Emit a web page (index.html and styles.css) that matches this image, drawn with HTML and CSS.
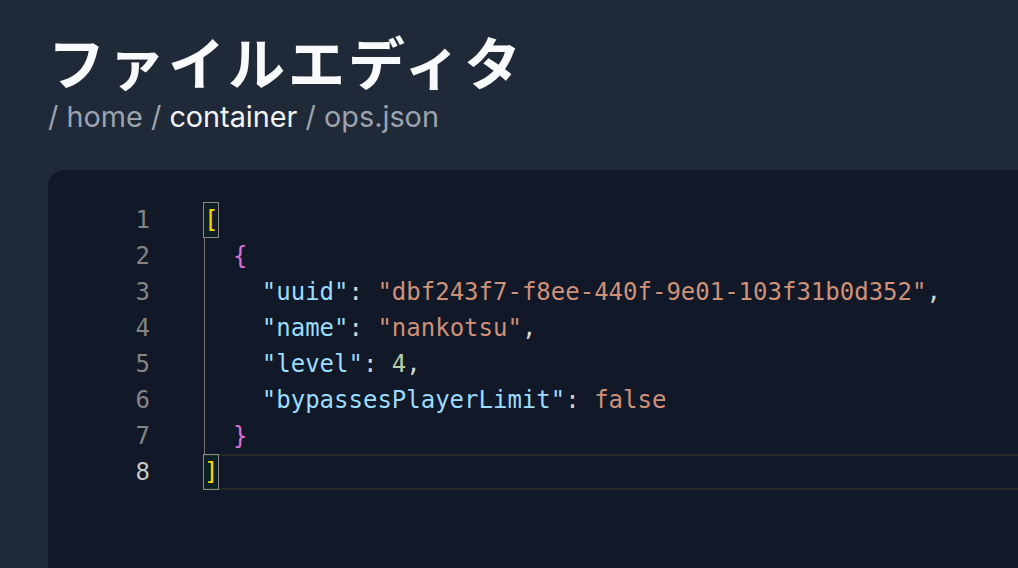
FILE: index.html
```html
<!DOCTYPE html>
<html lang="ja">
<head>
<meta charset="utf-8">
<link rel="stylesheet" href="styles.css">
</head>
<body>
<header class="head">
  <h1 class="title">ファイルエディタ</h1>
  <div class="crumbs"><span class="dim">/ home / </span><span class="cur">container</span><span class="dim"> / ops.json</span></div>
</header>
<section class="editor">
  <div class="gutter">
    <div class="ln">1</div>
    <div class="ln">2</div>
    <div class="ln">3</div>
    <div class="ln">4</div>
    <div class="ln">5</div>
    <div class="ln">6</div>
    <div class="ln">7</div>
    <div class="ln active">8</div>
  </div>
  <div class="code">
    <div class="line"><span class="match"><span class="b1">[</span></span></div>
    <div class="block">
      <div class="line"><span class="ind"></span><span class="b2">{</span></div>
      <div class="line"><span class="ind"></span><span class="ind"></span><span class="k">"uuid"</span><span class="p">: </span><span class="s">"dbf243f7-f8ee-440f-9e01-103f31b0d352"</span><span class="p">,</span></div>
      <div class="line"><span class="ind"></span><span class="ind"></span><span class="k">"name"</span><span class="p">: </span><span class="s">"nankotsu"</span><span class="p">,</span></div>
      <div class="line"><span class="ind"></span><span class="ind"></span><span class="k">"level"</span><span class="p">: </span><span class="n">4</span><span class="p">,</span></div>
      <div class="line"><span class="ind"></span><span class="ind"></span><span class="k">"bypassesPlayerLimit"</span><span class="p">: </span><span class="s">false</span></div>
      <div class="line"><span class="ind"></span><span class="b2">}</span></div>
    </div>
    <div class="line current"><span class="match"><span class="b1">]</span></span></div>
  </div>
</section>
</body>
</html>
```

FILE: styles.css
```css
html, body {
  margin: 0;
  padding: 0;
  background: #1f2937;
  height: 100%;
  overflow: hidden;
}
body {
  font-family: Inter, "Noto Sans CJK JP", sans-serif;
}
.head {
  padding: 22px 0 0 48px;
}
.title {
  margin: 0;
  font-family: "Noto Sans CJK JP", sans-serif;
  font-weight: 700;
  font-size: 57px;
  line-height: 76px;
  color: #f9fafb;
  letter-spacing: 3px;
}
.crumbs {
  font-size: 28.8px;
  line-height: 38px;
  margin-top: 0;
}
.dim { color: #9ca3af; }
.cur { color: #f3f4f6; }

.editor {
  margin: 34px 0 0 48px;
  background: #111827;
  border-radius: 16px 0 0 0;
  height: 600px;
  display: flex;
  padding-top: 32px;
  font-family: "DejaVu Sans Mono", monospace;
  font-size: 24px;
}
.gutter {
  width: 102px;
  flex: none;
}
.ln {
  height: 36px;
  line-height: 36px;
  text-align: right;
  color: #858585;
}
.ln.active { color: #c6c6c6; }
.code {
  margin-left: 53px;
  flex: 1;
  color: #d4d4d4;
}
.line {
  height: 36px;
  line-height: 36px;
  display: flex;
  align-items: center;
  white-space: pre;
}
.block {
  border-left: 1px solid #707070;
  margin-left: 1px;
}
.block .line { margin-left: -1px; }
.ind {
  display: inline-block;
  width: 28.9px;
  flex: none;
}
.current {
  border-top: 2px solid #282828;
  border-bottom: 2px solid #282828;
  box-sizing: border-box;
  height: 36px;
}
.match {
  display: inline-flex;
  align-items: center;
  box-sizing: border-box;
  height: 36px;
  border: 1px solid #888888;
  background: rgba(0, 100, 0, 0.1);
}
.current .match { margin-top: -2px; margin-bottom: -2px; }
.b1 { color: #ffd700; }
.b2 { color: #da70d6; }
.k { color: #9cdcfe; }
.s { color: #ce9178; }
.n { color: #b5cea8; }
.p { color: #d4d4d4; }
```
